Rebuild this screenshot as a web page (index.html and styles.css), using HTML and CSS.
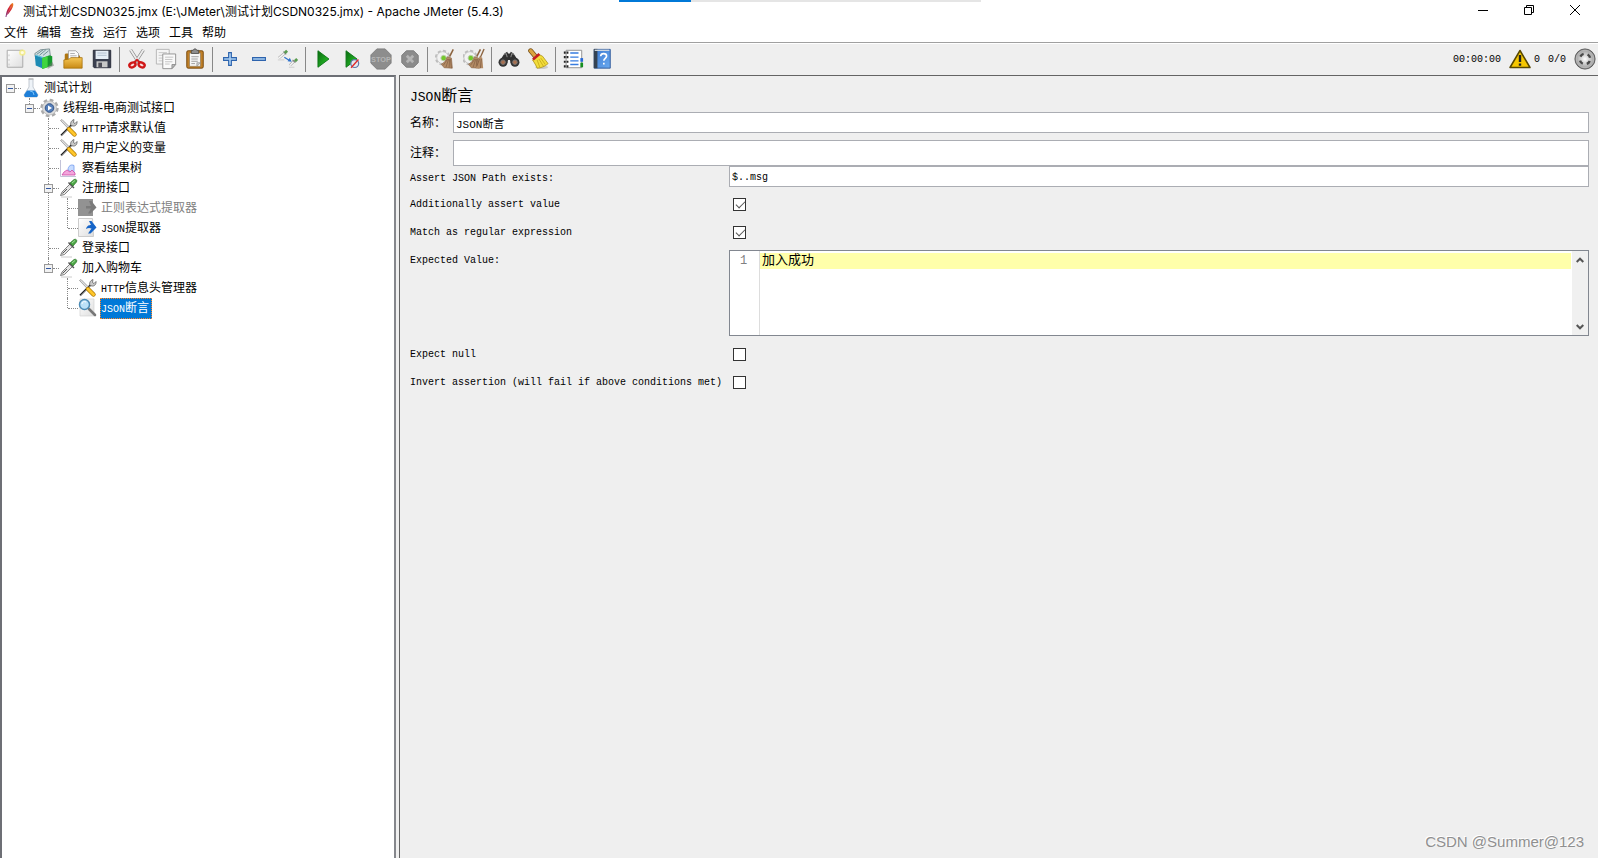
FILE: index.html
```html
<!DOCTYPE html>
<html lang="zh-CN">
<head>
<meta charset="utf-8">
<title>测试计划CSDN0325.jmx - Apache JMeter (5.4.3)</title>
<link rel="stylesheet" href="styles.css">
</head>
<body>
<svg class="defs" aria-hidden="true">
  <defs>
    <linearGradient id="g-gold" x1="0" y1="0" x2="0" y2="1"><stop offset="0" stop-color="#f5c655"/><stop offset="1" stop-color="#c98a15"/></linearGradient>
    <linearGradient id="g-green" x1="0" y1="0" x2="1" y2="1"><stop offset="0" stop-color="#0a6a10"/><stop offset="1" stop-color="#2ccc2c"/></linearGradient>
    <linearGradient id="g-blue" x1="0" y1="0" x2="1" y2="1"><stop offset="0" stop-color="#3a78d0"/><stop offset="1" stop-color="#6aaaf0"/></linearGradient>
    <linearGradient id="g-paper" x1="0" y1="0" x2="1" y2="1"><stop offset="0" stop-color="#ffffff"/><stop offset="1" stop-color="#dedede"/></linearGradient>
    <radialGradient id="g-ball"><stop offset="0" stop-color="#ffffff"/><stop offset="1" stop-color="#a4a4a4"/></radialGradient>
    <linearGradient id="g-feather" x1="1" y1="0" x2="0" y2="1"><stop offset="0" stop-color="#f08a1c"/><stop offset=".5" stop-color="#d01f35"/><stop offset="1" stop-color="#6a2a7c"/></linearGradient>
  </defs>
  <symbol id="i-tools" viewBox="0 0 19 20">
    <path d="M2 17.500 13.500 6" stroke="#777" stroke-width="2.200"/>
    <path d="M2 17 13 6" stroke="#222" stroke-width="1"/>
    <path d="M12 7.500c-1-2 0-5 3-6l-.5 3 1.500 1L18 3.500c.5 3-2 5-4 4.500z" fill="#c9c9c9" stroke="#555" stroke-width=".7"/>
    <path d="m1.500 2.500 1.500-1 8.500 8.500-1.300 1.500z" fill="#e0e0e0" stroke="#777" stroke-width=".6"/>
    <path d="m10 11 5.500 5.500" stroke="#a97400" stroke-width="4.400" stroke-linecap="round"/>
    <path d="m10 11 5.500 5.500" stroke="#ffc62a" stroke-width="3" stroke-linecap="round"/>
  </symbol>
  <symbol id="i-pipette" viewBox="0 0 19 20">
    <path d="M2 19h11" stroke="#ccc" stroke-width="1"/>
    <path d="M1.500 17.500 3 14 11 6l2.500 2.500-8 8z" fill="#e4e4e4" stroke="#666" stroke-width=".8"/>
    <path d="M3.500 15.500 8 11" stroke="#555" stroke-width="1"/>
    <path d="m9.500 4.500 5.500 5.500" stroke="#555" stroke-width="1.500"/>
    <path d="m11 5 4-3.500c2-1 3.500.8 2.500 2.500L14 8z" fill="#4da846" stroke="#2a7026" stroke-width=".7"/>
    <path d="m13 5 3-2.500" stroke="#a6dca0"/>
  </symbol>
  <symbol id="i-sheet-arrow" viewBox="0 0 19 20">
    <path d="M.5.500h14l1 18H.5z" fill="url(#g-paper)" stroke="#ccc"/>
    <path d="M8 11c1-3.500 3-4 5-4L11 3h2.500l5 6.500-6 6H10l3.500-5C11 9.500 10 10 8 11z" fill="#1765c8"/>
  </symbol>
  <symbol id="i-gearbroom" viewBox="0 0 22 24">
    <circle cx="8.500" cy="10.500" r="7.200" fill="none" stroke="#bdbdbd" stroke-width="2.600" stroke-dasharray="3.400 2.250"/>
    <circle cx="8.500" cy="10.500" r="6.500" fill="#f2f2f2" stroke="#c4c4c4"/>
    <circle cx="9.500" cy="11" r="3" fill="#74c82c" stroke="#c0cfb4"/>
    <path d="m20 1.500-4 8" stroke="#8c6440" stroke-width="1.700"/>
    <path d="M13.500 9.500 18 11l1 11-9-.5-3-4c3-1 5-4 6.500-8z" fill="#b38b65" stroke="#8a6648" stroke-width=".7"/>
    <path d="m14 12-5 7M15 12l-3 9M16 12l-.5 9.500M17 12l1 10" stroke="#76523a" stroke-width=".6"/>
  </symbol>
</svg>

<div class="loading" role="progressbar" aria-label="loading"><span class="loading-bar"></span></div>

<header class="titlebar">
  <svg class="feather" viewBox="0 0 12 18"><path d="M9.500 1c2 1 0 6-2 8.500C6 12 4 14 3 14.500L2.500 17H1.500C2 15 2 12 4 8s3.500-6 5.500-7z" fill="url(#g-feather)"/><path d="M3 14.500 8 5" stroke="#fff" stroke-opacity=".35" fill="none" stroke-width=".7"/></svg>
  <h1 class="title">测试计划CSDN0325.jmx (E:\JMeter\测试计划CSDN0325.jmx) - Apache JMeter (5.4.3)</h1>
  <div class="window-controls">
    <button aria-label="最小化"><svg viewBox="0 0 10 10"><path d="M0 5.500h10"/></svg></button>
    <button aria-label="还原"><svg viewBox="0 0 10 10"><path d="M.5 2.500h7v7h-7zM2.500 2.500v-2h7v7h-2"/></svg></button>
    <button aria-label="关闭"><svg viewBox="0 0 10 10"><path d="m0 0 10 10M10 0 0 10"/></svg></button>
  </div>
</header>

<nav class="menubar">
  <button>文件</button><button>编辑</button><button>查找</button><button>运行</button><button>选项</button><button>工具</button><button>帮助</button>
</nav>

<div class="toolbar" role="toolbar">
  <button aria-label="新建"><svg viewBox="0 0 24 24"><path d="M3.500 2.500h17v18.500h-17z" fill="url(#g-paper)" stroke="#a5a5a5"/><path d="M5.500 7v2M5.500 12v2M5.500 17v2" stroke="#c2c2c2"/><circle cx="20" cy="5" r="3.500" fill="#f5ee7c" opacity=".8"/><circle cx="20" cy="5" r="1.700" fill="#fffce0"/></svg></button>
  <button aria-label="模板"><svg viewBox="0 0 24 24"><path d="m2 6 6-4 10-1 1 8-9 4-7-1z" fill="#cfe0e2" stroke="#60777c" stroke-width=".8"/><path d="m4 7 7-5M7 8l7-6M11 8l6-5" stroke="#5f8088" stroke-width=".9"/><path d="m2 8 8 2v12l-7-3z" fill="#1d8bb4"/><path d="m2 8 2-.5 8 2.500-2 1z" fill="#5ec1dd"/><path d="m10 11 8-3 3 1v10l-11 4z" fill="#159a2c"/><path d="m10 11 6-2v12l-6 2z" fill="#3fd53f"/><path d="m21 15 2 4-7 4v-3z" fill="#707070" opacity=".5"/></svg></button>
  <button aria-label="打开"><svg viewBox="0 0 24 24"><path d="M3 21V7l1-1h4l1 2h10l1 2v11z" fill="#b07610"/><path d="M7 3h8l3 3v10H7z" fill="#fafafa" stroke="#909090" stroke-width=".8"/><path d="M9 6h5M9 8.500h7M9 11h7" stroke="#aaa"/><path d="M2 22v-9l6-1 1.500-1.500H22V22z" fill="url(#g-gold)" stroke="#a36c08" stroke-width=".8"/></svg></button>
  <button aria-label="保存"><svg viewBox="0 0 24 24"><path d="M2.500 2.500h19v19h-18l-1-1z" fill="#3b4050" stroke="#252936"/><path d="M5 3h14v9H5z" fill="#e6eef6"/><path d="M7 5.500h10M7 8h10" stroke="#aebccd"/><path d="M6 14.500h12V21H6z" fill="#c8c8c8"/><path d="M8 16h4v5H8z" fill="#4e4e58"/></svg></button>
  <span class="sep"></span>
  <button aria-label="剪切"><svg viewBox="0 0 24 24"><path d="m5 2 9 14M19 2l-9 14" stroke="#888" stroke-width="3.400"/><path d="m5 2 9 14M19 2l-9 14" stroke="#ededed" stroke-width="2"/><ellipse cx="7" cy="18.500" rx="3.500" ry="2.500" fill="#f7dcdc" stroke="#cf1717" stroke-width="2.600" transform="rotate(-25 7 18.500)"/><ellipse cx="17" cy="18.500" rx="3.500" ry="2.500" fill="#f7dcdc" stroke="#cf1717" stroke-width="2.600" transform="rotate(25 17 18.500)"/><path d="m9 16 3-3 3 3" stroke="#cf1717" stroke-width="2" fill="none"/></svg></button>
  <button aria-label="复制"><svg viewBox="0 0 24 24"><path d="M1.500 1.500h14v16h-14z" fill="#f5f5f5" stroke="#b4b4b4"/><path d="M4 5h9M4 8h6M4 11h4M4 14h4" stroke="#c6c6c6"/><path d="M8.500 6.500h14V18l-4 4.500h-10z" fill="#fafafa" stroke="#8f8f8f"/><path d="M18.500 22.500V18h4z" fill="#bbb" stroke="#8f8f8f"/><path d="M11 10h9M11 12.500h8M11 15h8M11 17.500h5" stroke="#c0c0c0"/></svg></button>
  <button aria-label="粘贴"><svg viewBox="0 0 24 24"><rect x="3" y="3" width="18" height="19" rx="1.500" fill="#c08028" stroke="#74450a"/><path d="M6 5.500h12V20H6z" fill="#f6f6f6" stroke="#8f7550" stroke-width=".7"/><path d="M8 2.500h2l1-1.500h2l1 1.500h2V6H8z" fill="#8d8d8d" stroke="#444" stroke-width=".8"/><path d="M8 9.500h8M8 12h7M8 14.500h7M8 17h4" stroke="#999"/><path d="M14 20v-4h4z" fill="#ccc" stroke="#888" stroke-width=".6"/></svg></button>
  <span class="sep"></span>
  <button aria-label="展开"><svg viewBox="0 0 24 24"><path d="M10.500 5h3v5.500H19v3h-5.500V19h-3v-5.500H5v-3h5.500z" fill="#a8cef2" stroke="#2d63ad" stroke-width="1.200"/></svg></button>
  <button aria-label="折叠"><svg viewBox="0 0 24 24"><path d="M5 10.500h14v3H5z" fill="#a8cef2" stroke="#2d63ad" stroke-width="1.200"/></svg></button>
  <button aria-label="切换"><svg viewBox="0 0 24 24"><path d="m2 11 6-5M14 19l4-4" stroke="#a8a8a8" stroke-width="2.800"/><path d="m2 11 6-5M14 19l4-4" stroke="#f7f7f7" stroke-width="1.600"/><path d="m7 4 3 3M17 13l3 3" stroke="#777" stroke-width="1.200"/><path d="m8.500 5.500 2.500-2.500M19.500 14.500l2.500-2.500" stroke="#5a9c50" stroke-width="3"/><path d="m8 10 6 4" stroke="#2f72cb" stroke-width="1.300"/><path d="m16 15-4.500-.5L14 10.500z" fill="#2f72cb"/><path d="M1 13h7M13 21h6" stroke="#ccc"/></svg></button>
  <span class="sep"></span>
  <button aria-label="启动"><svg viewBox="0 0 24 24"><path d="M6.500 3v18l12-9z" fill="url(#g-green)" stroke="#0b7415"/></svg></button>
  <button aria-label="不停顿启动"><svg viewBox="0 0 24 24"><path d="M5.500 3v18l12-9z" fill="url(#g-green)" stroke="#0b7415"/><circle cx="15" cy="17" r="4.300" fill="#e5e8ef" stroke="#5c77a9" stroke-width="1.300"/><path d="m11 21.500 8-9" stroke="#e02c2c" stroke-width="1.500"/></svg></button>
  <button aria-label="停止" disabled><svg viewBox="0 0 24 24"><path d="M7.500 1h9L23 7.500v9L16.500 23h-9L1 16.500v-9z" fill="#8d8d8d" stroke="#7c7c7c"/><text class="stop-text" x="12" y="15" text-anchor="middle">STOP</text></svg></button>
  <button aria-label="关闭测试" disabled><svg viewBox="0 0 24 24"><path d="M8 3h8l5 5v8l-5 5H8l-5-5V8z" fill="#8b8b8b" stroke="#7c7c7c"/><path d="m8.500 8.500 7 7M15.500 8.500l-7 7" stroke="#b4b4b4" stroke-width="3"/></svg></button>
  <span class="sep"></span>
  <button aria-label="清除"><svg viewBox="0 0 22 24"><use href="#i-gearbroom"/></svg></button>
  <button aria-label="清除全部"><svg viewBox="0 0 24 24"><use href="#i-gearbroom" x="-1" width="22" height="24"/><path d="m23 1-4 9" stroke="#8c6440" stroke-width="1.500"/><path d="m18 9 3 1.500L22 22h-8z" fill="#b38b65"/><path d="m18 12-3 8M20 12l-1 10" stroke="#76523a" stroke-width=".7"/></svg></button>
  <span class="sep"></span>
  <button aria-label="查找"><svg viewBox="0 0 24 24"><path d="M2 14 7 6l3-2 1 2h2l1-2 3 2 5 8-3 4-5-2-1-3h-2l-1 3-5 2z" fill="#303030"/><path d="m7 7 2-1 1 4M17 7l-2-1-1 4" stroke="#999" fill="none"/><circle cx="5.500" cy="15.500" r="4.900" fill="#333"/><circle cx="18.500" cy="15.500" r="4.900" fill="#333"/><circle cx="5.500" cy="15.500" r="2.500" fill="#a86f4f" stroke="#777"/><circle cx="18.500" cy="15.500" r="2.500" fill="#a86f4f" stroke="#777"/></svg></button>
  <button aria-label="重置查找"><svg viewBox="0 0 24 24"><ellipse cx="16" cy="21" rx="7" ry="2" fill="#ccc"/><path d="m4 3 5 6" stroke="#79521a" stroke-width="5.400" stroke-linecap="round"/><path d="m4 3 5 6" stroke="#dba33f" stroke-width="3.800" stroke-linecap="round"/><path d="m6 13 7-6 4 2c2 3 4 5 6 8-3 3-8 5-12 5-1-3-3-6-5-9z" fill="#f2dd3c" stroke="#a98c10" stroke-width=".8"/><path d="m11 13 3 8M13 12l5 8M15 11l5 7" stroke="#b9990e" stroke-width=".7"/><path d="m6.500 12.500 7-6" stroke="#c41e22" stroke-width="2.800"/></svg></button>
  <span class="sep"></span>
  <button aria-label="函数助手"><svg viewBox="0 0 24 24"><path d="M4.500 2.500h17v19h-17z" fill="#fff" stroke="#8b8b8b"/><path d="M20 11h3v4h-3z" fill="#2668d8"/><path d="M20 16h3v5h-3z" fill="#168e20"/><path d="M9 5.500h9M9 10h9M9 14h9M9 18h9" stroke="#377cdf" stroke-width="1.500"/><path d="M2 5h5M2 10h5M2 15h5M2 20h5" stroke="#222" stroke-width="2.400" stroke-dasharray="2 1"/></svg></button>
  <button aria-label="帮助"><svg viewBox="0 0 24 24"><path d="M3.500 1.500H21V22H3.500z" fill="url(#g-blue)" stroke="#2c5798"/><path d="M3 1h4v21H3z" fill="#344252"/><path d="M4 2.500h16" stroke="#ccd5df" stroke-width="1.500"/><path d="M10.500 9c.3-4 6.500-3.500 6.500-.2 0 2.500-3 2.500-3 5.200M14 16v2" fill="none" stroke="#fff" stroke-width="1.800"/></svg></button>
  <div class="status">
    <span class="elapsed">00:00:00</span>
    <button class="warn"><svg viewBox="0 0 22 20"><path d="M11 1.500 21 18.500H1z" fill="#f6c700" stroke="#584800" stroke-width="1.500" stroke-linejoin="round"/><path d="M11 6v7M11 14.500v2.300" stroke="#222" stroke-width="2.400"/></svg><span>0</span></button>
    <span>0/0</span>
    <svg class="led" viewBox="0 0 24 24"><circle cx="12" cy="12" r="11" fill="#8e8e8e" stroke="#555"/><circle cx="12" cy="12" r="9.500" fill="url(#g-ball)" stroke="#bbb"/><circle cx="12" cy="12" r="5.700" fill="none" stroke="#4a4a4a" stroke-width="2.600" stroke-dasharray="4.400 4.550" stroke-dashoffset="-2.300"/></svg>
  </div>
</div>

<main class="workspace">
  <aside class="tree-pane">
    <ul class="tree">
      <li>
        <div class="node"><button class="toggle" aria-label="折叠"></button><svg class="node-icon" viewBox="0 0 19 20"><path d="M8 1h4v8l5 8-1 2H4l-1-2 5-8z" fill="#eef3f8" stroke="#b5bdc7" stroke-width=".8"/><path d="M6 12.500h8l3 4.500-1 2H4l-1-2z" fill="#1e7fd8"/><path d="m9 13 3 1 1 3" stroke="#78c2f7" fill="none"/><path d="M7.500 1h5" stroke="#bbb" stroke-width="1.400"/></svg><span class="label">测试计划</span></div>
        <ul>
          <li>
            <div class="node"><button class="toggle" aria-label="折叠"></button><svg class="node-icon" viewBox="0 0 19 20"><circle cx="9.500" cy="10" r="8" fill="none" stroke="#aaa" stroke-width="2.400" stroke-dasharray="3.700 2.580"/><circle cx="9.500" cy="10" r="7" fill="#dcdcdc" stroke="#aaa" stroke-width=".6"/><circle cx="9.500" cy="10" r="4.300" fill="#557fba" stroke="#345487"/><path d="M8 7.500v5l4-2.500z" fill="#fff"/></svg><span class="label">线程组-电商测试接口</span></div>
            <ul>
              <li><div class="node"><span class="stub"></span><svg class="node-icon"><use href="#i-tools"/></svg><span class="label"><span class="latin">HTTP</span>请求默认值</span></div></li>
              <li><div class="node"><span class="stub"></span><svg class="node-icon"><use href="#i-tools"/></svg><span class="label">用户定义的变量</span></div></li>
              <li><div class="node"><span class="stub"></span><svg class="node-icon" viewBox="0 0 19 20"><path d="M1.500 2v16.500H17" stroke="#c3c3d8" fill="none"/><path d="M9 12c0-4 3-6 6-4.500V15l-3-1z" fill="#c7dcff" stroke="#7199ee" stroke-width=".8"/><path d="m3 17 2-3 3-2 3 2 2-2 3 3v2z" fill="#f3a6dc" stroke="#cc48a4" stroke-width=".8"/></svg><span class="label">察看结果树</span></div></li>
              <li>
                <div class="node"><button class="toggle" aria-label="折叠"></button><svg class="node-icon"><use href="#i-pipette"/></svg><span class="label">注册接口</span></div>
                <ul>
                  <li><div class="node"><span class="stub"></span><svg class="node-icon" viewBox="0 0 19 20"><path d="M0 1h15v17H0z" fill="#929292"/><path d="M8 8h5L11 3h2.500l5 6.500-6 6H10l3-5H8z" fill="#7b7b7b"/></svg><span class="label disabled">正则表达式提取器</span></div></li>
                  <li><div class="node"><span class="stub"></span><svg class="node-icon"><use href="#i-sheet-arrow"/></svg><span class="label"><span class="latin">JSON</span>提取器</span></div></li>
                </ul>
              </li>
              <li><div class="node"><span class="stub"></span><svg class="node-icon"><use href="#i-pipette"/></svg><span class="label">登录接口</span></div></li>
              <li>
                <div class="node"><button class="toggle" aria-label="折叠"></button><svg class="node-icon"><use href="#i-pipette"/></svg><span class="label">加入购物车</span></div>
                <ul>
                  <li><div class="node"><span class="stub"></span><svg class="node-icon"><use href="#i-tools"/></svg><span class="label"><span class="latin">HTTP</span>信息头管理器</span></div></li>
                  <li><div class="node"><span class="stub"></span><svg class="node-icon" viewBox="0 0 19 20"><path d="M2 1h14v17H2z" fill="url(#g-paper)" stroke="#d2d2d2" stroke-width=".7"/><path d="m11 11 6 6" stroke="#777" stroke-width="2.600" stroke-linecap="round"/><circle cx="6.500" cy="6.500" r="5" fill="#bce1f8" stroke="#4c8bb5" stroke-width="1.500"/><path d="M4 6c0-2 2-3 4-2" stroke="#fff" fill="none"/></svg><span class="label selected"><span class="latin">JSON</span>断言</span></div></li>
                </ul>
              </li>
            </ul>
          </li>
        </ul>
      </li>
    </ul>
  </aside>

  <section class="editor">
    <h2 class="heading"><span class="latin">JSON</span>断言</h2>
    <div class="meta name-row"><label for="name">名称：</label>
      <div class="field"><input id="name" type="text" value="JSON断言"></div></div>
    <div class="meta comment-row"><label for="comment">注释：</label>
      <div class="field"><input id="comment" type="text"></div></div>
    <form class="props">
      <label for="path">Assert JSON Path exists:</label>
      <input class="path" id="path" type="text" value="$..msg">
      <label for="additional">Additionally assert value</label>
      <input id="additional" type="checkbox" checked>
      <label for="regex">Match as regular expression</label>
      <input id="regex" type="checkbox" checked>
      <label class="top" for="expected">Expected Value:</label>
      <div class="code">
        <span class="gutter">1</span>
        <textarea id="expected" spellcheck="false">加入成功</textarea>
        <div class="scroll">
          <button type="button" aria-label="向上"><svg viewBox="0 0 8 6"><path d="m.7 5 3.300-3.300L7.300 5"/></svg></button>
          <button type="button" aria-label="向下"><svg viewBox="0 0 8 6"><path d="m.7 1 3.300 3.300L7.300 1"/></svg></button>
        </div>
      </div>
      <label for="null">Expect null</label>
      <input id="null" type="checkbox">
      <label for="invert">Invert assertion (will fail if above conditions met)</label>
      <input id="invert" type="checkbox">
    </form>
    <div class="watermark">CSDN @Summer@123</div>
  </section>
</main>
</body>
</html>
```
FILE: styles.css
```css
* { box-sizing: border-box; }

body {
  margin: 0;
  min-height: 100vh;
  display: flex;
  flex-direction: column;
  position: relative;
  background: #efefef;
  color: #000;
  font: 12px/20px "Liberation Sans", "Noto Sans CJK SC", sans-serif;
}

button {
  margin: 0;
  padding: 0;
  border: 0;
  background: none;
  color: inherit;
  font: inherit;
}

svg { display: block; fill: none; }
.defs { position: absolute; width: 0; height: 0; }
.latin { font-family: "Liberation Mono", monospace; font-size: 10px; }

/* Window frame */
.loading {
  position: absolute;
  top: 0;
  left: 619px;
  width: 362px;
  height: 2px;
  background: #e5e5e5;
}
.loading-bar { display: block; width: 20%; height: 2px; background: #0078d7; }

.titlebar {
  display: flex;
  height: 24px;
  padding-left: 4px;
  background: #fff;
}
.feather { width: 11px; height: 16px; margin-top: 2px; }
.title {
  flex: 1;
  margin: 0 0 0 8px;
  font: 12px/24px Inter, "Noto Sans CJK SC", sans-serif;
  white-space: nowrap;
}
.window-controls { display: flex; height: 20px; }
.window-controls button { width: 46px; display: grid; place-items: center; }
.window-controls svg { width: 10px; height: 10px; stroke: #000; overflow: visible; }

.menubar {
  display: flex;
  gap: 9px;
  height: 19px;
  padding-left: 4px;
  background: #fff;
  border-bottom: 1px solid #a0a0a0;
}
.menubar button { line-height: 18px; }

/* Toolbar */
.toolbar {
  display: flex;
  align-items: center;
  height: 32px;
  padding-bottom: 1px;
  border-top: 1px solid #fff;
}
.toolbar > button { width: 29px; display: grid; place-items: center; }
.toolbar > button svg { width: 22px; height: 22px; }
.sep { width: 6px; height: 25px; padding-left: 3px; }
.sep::before { content: ""; display: block; width: 1px; height: 100%; background: #888; }
.stop-text { font: bold 8px "Liberation Sans", sans-serif; fill: #b4b4b4; }
.status {
  display: flex;
  align-items: center;
  gap: 8px;
  margin-left: auto;
  padding-right: 2px;
  font: 10px/20px "Liberation Mono", monospace;
}
.status span { padding-top: 2px; }
.warn { display: flex; align-items: center; gap: 3px; }
.warn svg { width: 22px; height: 20px; }
.led { width: 22px; height: 22px; }

/* Workspace */
.workspace { flex: 1; display: flex; gap: 3px; }
.tree-pane {
  flex: 0 0 396px;
  padding: 1px 0 0 3px;
  background: #fff;
  border: 2px solid #6d6f75;
  border-right-color: #85878c;
  border-bottom: 0;
}
.tree, .tree ul { margin: 0; padding: 0; list-style: none; }
.tree ul { padding-left: 19px; }
.tree li { position: relative; }
.tree ul > li::before {
  content: "";
  position: absolute;
  top: 0;
  bottom: 0;
  left: 5px;
  border-left: 1px dotted #888;
}
.tree ul > li:last-child::before { bottom: auto; height: 10px; }
.node { display: flex; align-items: center; height: 20px; }
.toggle, .stub { position: relative; flex: 0 0 16px; height: 9px; }
.toggle {
  background:
    linear-gradient(#3257a0, #3257a0) 3px 4px / 5px 1px no-repeat,
    linear-gradient(#999, #999) 1px 0 / 9px 1px no-repeat,
    linear-gradient(#999, #999) 1px 8px / 9px 1px no-repeat,
    linear-gradient(#999, #999) 1px 0 / 1px 9px no-repeat,
    linear-gradient(#999, #999) 9px 0 / 1px 9px no-repeat,
    linear-gradient(#f2f2f2, #f2f2f2) 1px 0 / 9px 9px no-repeat;
}
.toggle::after, .stub::after {
  content: "";
  position: absolute;
  top: 4px;
  right: 0;
  left: 10px;
  border-top: 1px dotted #888;
}
.stub::after { left: 6px; }
.node-icon { flex: 0 0 19px; height: 20px; margin-right: 3px; }
.label { padding: 1px 1px 0; line-height: 19px; white-space: nowrap; }
.disabled { color: #808080; }
.selected {
  color: #fff;
  background: #0078d7;
  outline: 1px dotted #ff8728;
  outline-offset: -1px;
  padding-right: 3px;
}

.editor {
  flex: 1;
  min-width: 0;
  position: relative;
  padding: 8px 9px 0 10px;
  border-top: 1px solid #646464;
  border-left: 1px solid #646464;
}
.heading { margin: 0 0 2px; font-size: 16px; font-weight: 400; line-height: 24px; }
.heading .latin { font-size: 13px; }
.meta { display: flex; align-items: center; }
.meta label { flex: 0 0 43px; }
.field { flex: 1; display: flex; }
.name-row { height: 21px; margin-bottom: 7px; }
.comment-row { height: 26px; }
input[type="text"] {
  width: 100%;
  height: 21px;
  padding: 0 2px;
  border: 1px solid #abadb3;
  border-radius: 0;
  background: #fff;
  color: #000;
  font: 11px/19px "Liberation Mono", "Noto Sans CJK SC", monospace;
}
.comment-row input[type="text"] { height: 26px; }

.props {
  display: grid;
  grid-template-columns: 319px 1fr;
  grid-template-rows: 24px 28px 28px 94px 28px 28px;
  align-items: center;
  margin: 0;
  font: 10px/20px "Liberation Mono", monospace;
}
.props label { padding-top: 2px; }
.props input.path { align-self: start; padding-top: 2px; font-size: 10px; }
.props .top { align-self: start; padding-top: 5px; }
.props input[type="checkbox"] {
  appearance: none;
  width: 13px;
  height: 13px;
  margin: 0 0 0 4px;
  border: 1px solid #333;
  background: #fff;
}
.props input[type="checkbox"]:checked::before {
  content: "";
  display: block;
  width: 8px;
  height: 4px;
  margin: 2px 0 0 2px;
  border: solid #555;
  border-width: 0 0 1px 1px;
  transform: rotate(-45deg);
}
.code {
  display: flex;
  height: 86px;
  background: #fff;
  border: 1px solid #828790;
}
.gutter {
  flex: 0 0 30px;
  padding-left: 10px;
  border-right: 1px solid #ddd;
  color: #808080;
  font-size: 12px;
}
.code textarea {
  flex: 1;
  min-width: 0;
  margin: 2px 1px 0 0;
  padding: 0 2px;
  border: 0;
  outline: 0;
  resize: none;
  overflow: hidden;
  background: linear-gradient(#ffffaa, #ffffaa) 0 0 / 100% 16px no-repeat #fff;
  color: #000;
  font: 13px/15px "Liberation Mono", "Noto Sans CJK SC", monospace;
}
.scroll {
  flex: 0 0 16px;
  display: flex;
  flex-direction: column;
  justify-content: space-between;
  background: #f0f0f0;
}
.scroll button { height: 17px; display: grid; place-items: center; }
.scroll svg { width: 8px; height: 6px; stroke: #555; stroke-width: 2; }

.watermark {
  position: absolute;
  right: 14px;
  bottom: 6px;
  color: #8f8f8f;
  font-size: 15px;
  text-shadow: -1px -1px 0 #fff;
}
```
